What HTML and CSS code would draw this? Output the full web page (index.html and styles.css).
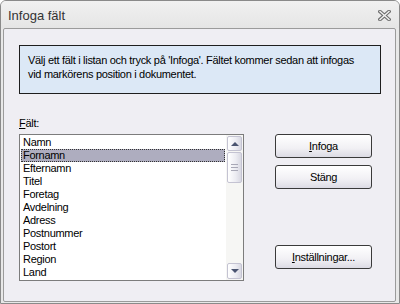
FILE: index.html
```html
<!DOCTYPE html>
<html>
    <head>
        <title>Infoga fält</title>
        <link rel="stylesheet" href="styles.css">
    </head>
    <body>
        <div class="window">
            <!-- title bar with the close cross -->
            <div class="titlebar">
                <span class="title">Infoga fält</span>
                <svg class="close" width="13" height="11" viewBox="0 0 13 11">
                    <path d="M2 1.5 L11 9.5 M11 1.5 L2 9.5" stroke="#6f6f6f" stroke-width="3.6" stroke-linecap="square" fill="none"/>
                    <path d="M2 1.5 L11 9.5 M11 1.5 L2 9.5" stroke="#f2f2f2" stroke-width="1.4" stroke-linecap="square" fill="none"/>
                </svg>
            </div>

            <div class="client">
                <div class="info">Välj ett fält i listan och tryck på 'Infoga'. Fältet kommer sedan att infogas<br>vid markörens position i dokumentet.</div>

                <div class="main">
                    <div class="fields">
                        <div class="label"><u>F</u>ält:</div>
                        <div class="listbox">
                            <ul class="items">
                                <li>Namn</li>
                                <li class="selected">Fornamn</li>
                                <li>Efternamn</li>
                                <li>Titel</li>
                                <li>Foretag</li>
                                <li>Avdelning</li>
                                <li>Adress</li>
                                <li>Postnummer</li>
                                <li>Postort</li>
                                <li>Region</li>
                                <li>Land</li>
                            </ul>
                            <div class="scrollbar">
                                <div class="sb-btn"><span class="arrow-up"></span></div>
                                <div class="sb-thumb"><span class="grip"></span></div>
                                <div class="sb-track"></div>
                                <div class="sb-btn down"><span class="arrow-down"></span></div>
                            </div>
                        </div>
                    </div>

                    <div class="actions">
                        <div class="button"><u>I</u>nfoga</div>
                        <div class="button">Stäng</div>
                        <div class="button settings"><u>I</u>nställningar...</div>
                    </div>
                </div>
            </div>
        </div>
    </body>
</html>
```

FILE: styles.css
```css
body {
    margin: 0;
    background: #ffffff;
    font-family: "Liberation Sans", Arial, sans-serif;
}

.window {
    width: 400px;
    height: 304px;
    box-sizing: border-box;
    border: 1px solid #8a8a8a;
    border-radius: 6px 6px 0 0;
    background: #e8e8e8;
    display: flex;
    flex-direction: column;
}

/* title bar */
.titlebar {
    height: 27px;
    flex: none;
    display: flex;
    align-items: center;
    justify-content: space-between;
    padding: 0 8px 0 7px;
    border-radius: 5px 5px 0 0;
    background: linear-gradient(#f1f1f1, #e5e5e5);
}

.title {
    font-size: 13px;
    color: #333333;
    margin-top: 1px;
}

.close {
    display: block;
    margin-top: 1px;
}

/* dialog body */
.client {
    flex: 1;
    margin: 0 3px 1px 2px;
    border: 1px solid #9b9b9b;
    border-radius: 2px;
    background: #efeef3;
    padding: 16px 14px 0 15px;
    font-size: 11px;
    letter-spacing: -0.3px;
    color: #000000;
}

.info {
    height: 49px;
    box-sizing: border-box;
    border: 1px solid #1e1e1e;
    background: #dce8f6;
    padding: 7px 8px;
    line-height: 14px;
    white-space: nowrap;
}

.main {
    display: flex;
    margin-top: 22px;
}

.fields {
    width: 225px;
}

.label {
    height: 18px;
    line-height: 14px;
}

/* list box */
.listbox {
    height: 147px;
    box-sizing: border-box;
    border: 1px solid #7c7c7c;
    background: #ffffff;
    display: flex;
}

.items {
    list-style: none;
    margin: 0;
    padding: 1px 0;
    width: 206px;
}

.items li {
    height: 13px;
    line-height: 13px;
    padding-left: 3px;
    white-space: nowrap;
}

.items li.selected {
    margin: 0 1px;
    padding-left: 1px;
    box-sizing: border-box;
    border: 1px dotted #333333;
    background: #aeadbf;
    line-height: 11px;
}

/* scroll bar */
.scrollbar {
    width: 17px;
    box-sizing: border-box;
    padding: 1px 1px 1px 1px;
    background: #f6f6f4;
    display: flex;
    flex-direction: column;
}

.sb-btn, .sb-thumb {
    box-sizing: border-box;
    border: 1px solid #c4c3d2;
    border-radius: 2px;
    background: linear-gradient(to right, #ffffff, #ececf2 60%, #d8d8e2);
    display: flex;
    align-items: center;
    justify-content: center;
}

.sb-btn {
    height: 15px;
}

.sb-btn.down {
    height: 16px;
}

.sb-thumb {
    height: 31px;
    margin-top: 1px;
}

.sb-track {
    flex: 1;
}

.arrow-up {
    width: 0;
    height: 0;
    border-left: 4px solid transparent;
    border-right: 4px solid transparent;
    border-bottom: 4px solid #4a5470;
}

.arrow-down {
    width: 0;
    height: 0;
    border-left: 4px solid transparent;
    border-right: 4px solid transparent;
    border-top: 4px solid #4a5470;
}

.grip {
    width: 7px;
    height: 5px;
    border-top: 1px solid #a8a8b6;
    border-bottom: 1px solid #a8a8b6;
    background: linear-gradient(transparent 2px, #a8a8b6 2px, #a8a8b6 3px, transparent 3px);
}

/* push buttons */
.actions {
    margin-left: 31px;
    padding-top: 18px;
    display: flex;
    flex-direction: column;
}

.button {
    width: 97px;
    height: 24px;
    box-sizing: border-box;
    border: 1px solid #3a3a3a;
    border-radius: 3px;
    background: linear-gradient(#ffffff, #f1f0f4 60%, #dcdbe4);
    text-align: center;
    line-height: 22px;
    margin-bottom: 7px;
}

.button.settings {
    margin-top: 49px;
}
```
